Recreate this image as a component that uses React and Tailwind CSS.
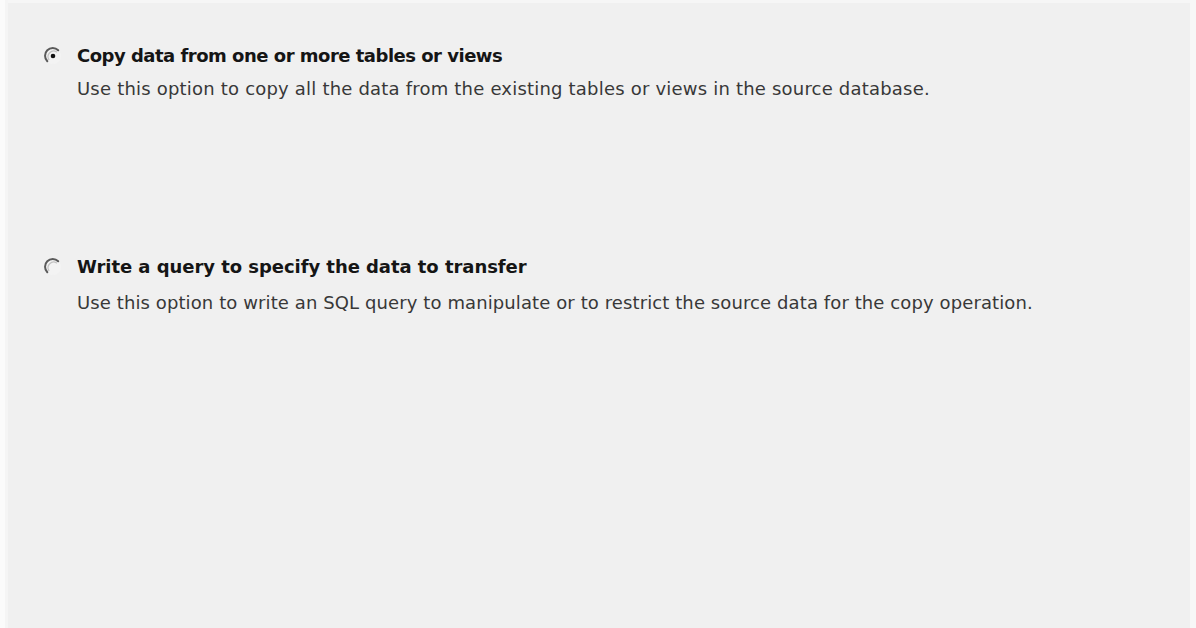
import React from "react";

function Radio({ checked }) {
  return (
    <svg width="18" height="18" viewBox="0 0 18 18" className="shrink-0">
      <circle cx="9" cy="9" r="8" fill="#f3f3f3" />
      <path d="M3.3 14.2 A7.6 7.6 0 0 1 14.2 3.3" fill="none" stroke="#5a5a5a" strokeWidth="2" strokeLinecap="round" />
      <path d="M4.9 12.6 A5.6 5.6 0 0 1 12.6 4.9" fill="none" stroke="#c2c2c2" strokeWidth="1.2" strokeLinecap="round" />
      {checked && <circle cx="9" cy="9" r="2.3" fill="#111" />}
    </svg>
  );
}

function Option({ checked, title, desc, gap, titleTrack, descTrack }) {
  return (
    <div className="flex flex-col">
      <div className="flex items-center gap-[15px] h-[22px]">
        <Radio checked={checked} />
        <span
          className={`text-[18px] font-bold text-[#151515] leading-[22px] whitespace-nowrap ${titleTrack}`}
          style={{ fontFamily: '"DejaVu Sans", sans-serif' }}
        >
          {title}
        </span>
      </div>
      <div
        className={`pl-[33px] ${gap} text-[18px] text-[#383838] leading-[22px] whitespace-nowrap ${descTrack}`}
        style={{ fontFamily: '"DejaVu Sans", sans-serif' }}
      >
        {desc}
      </div>
    </div>
  );
}

export default function App() {
  return (
    <div className="w-[1196px] h-[628px] bg-[#f0f0f0] flex overflow-hidden">
      <div className="w-[5px] bg-[#fbfbfb]" />
      <div className="w-[3px] bg-[#f5f5f5]" />
      <div className="flex-1 flex flex-col">
        <div className="h-[3px] bg-[#f6f6f6]" />
        <div className="flex flex-col pl-[36px] pt-[42px]">
          <Option
            checked
            gap="mt-[11px]"
            titleTrack="tracking-[-0.5px]"
            descTrack="tracking-[0.2px]"
            title="Copy data from one or more tables or views"
            desc="Use this option to copy all the data from the existing tables or views in the source database."
          />
          <div className="h-[156px]" />
          <Option
            gap="mt-[14px]"
            titleTrack="tracking-[-0.05px]"
            descTrack="tracking-[0.1px]"
            title="Write a query to specify the data to transfer"
            desc="Use this option to write an SQL query to manipulate or to restrict the source data for the copy operation."
          />
        </div>
      </div>
      <div className="w-[6px] bg-[#f7f7f7]" />
    </div>
  );
}
